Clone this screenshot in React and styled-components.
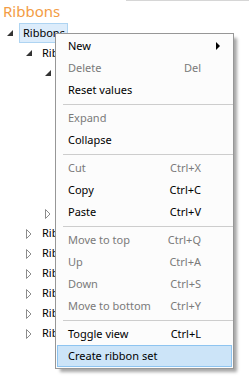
import React from "react";
import styled, { createGlobalStyle } from "styled-components";

const GlobalStyle = createGlobalStyle`
  html, body {
    margin: 0;
    padding: 0;
    background: #fff;
  }
  body {
    font-family: "Noto Sans", "Open Sans", sans-serif;
  }
`;

// rows under the context menu keep no label, only their expander shows
const treeRows = [
  { level: 0, state: "open", text: "Ribbons", selected: true },
  { level: 1, state: "open", text: "Ribbon 1" },
  { level: 2, state: "open" },
  { level: 3, state: "leaf" },
  { level: 3, state: "leaf" },
  { level: 3, state: "leaf" },
  { level: 3, state: "leaf" },
  { level: 3, state: "leaf" },
  { level: 3, state: "leaf" },
  { level: 2, state: "closed" },
  { level: 1, state: "closed", text: "Ribbon 2" },
  { level: 1, state: "closed", text: "Ribbon 3" },
  { level: 1, state: "closed", text: "Ribbon 4" },
  { level: 1, state: "closed", text: "Ribbon 5" },
  { level: 1, state: "closed", text: "Ribbon 6" },
  { level: 1, state: "closed", text: "Ribbon 7" },
];

// null = separator
const menuItems = [
  { text: "New", submenu: true },
  { text: "Delete", keys: "Del", disabled: true },
  { text: "Reset values" },
  null,
  { text: "Expand", disabled: true },
  { text: "Collapse" },
  null,
  { text: "Cut", keys: "Ctrl+X", disabled: true },
  { text: "Copy", keys: "Ctrl+C" },
  { text: "Paste", keys: "Ctrl+V" },
  null,
  { text: "Move to top", keys: "Ctrl+Q", disabled: true },
  { text: "Up", keys: "Ctrl+A", disabled: true },
  { text: "Down", keys: "Ctrl+S", disabled: true },
  { text: "Move to bottom", keys: "Ctrl+Y", disabled: true },
  null,
  { text: "Toggle view", keys: "Ctrl+L" },
  { text: "Create ribbon set", active: true },
];

function Expander({ state }) {
  if (state === "open") {
    return (
      <ExpanderBox>
        <svg width="6" height="6" viewBox="0 0 6 6">
          <polygon points="6,0 6,6 0,6" fill="#333" />
        </svg>
      </ExpanderBox>
    );
  }
  if (state === "closed") {
    return (
      <ExpanderBox>
        <ClosedArrow width="6" height="10" viewBox="0 0 6 10">
          <polygon points="0.5,0.5 0.5,9.5 5,5" fill="#fff" stroke="#8c8c8c" strokeWidth="1" />
        </ClosedArrow>
      </ExpanderBox>
    );
  }
  return <ExpanderBox />;
}

export default function App() {
  return (
    <>
      <GlobalStyle />
      <Page>
        <TopRule />
        <Heading>Ribbons</Heading>
        <Tree>
          {treeRows.map((row, i) => (
            <Row key={i} $level={row.level}>
              <Expander state={row.state} />
              {row.text && <Label $selected={row.selected}>{row.text}</Label>}
            </Row>
          ))}
        </Tree>

        {/* context menu */}
        <Menu>
          {menuItems.map((item, i) =>
            item === null ? (
              <Separator key={i} />
            ) : (
              <MenuItem key={i} $disabled={item.disabled} $active={item.active}>
                <span>{item.text}</span>
                <Shortcut>{item.keys}</Shortcut>
                <SubArrow>
                  {item.submenu && (
                    <svg width="4" height="8" viewBox="0 0 4 8">
                      <polygon points="0,0 4,4 0,8" fill="#000" />
                    </svg>
                  )}
                </SubArrow>
              </MenuItem>
            )
          )}
        </Menu>
      </Page>
    </>
  );
}

const Page = styled.div`
  position: relative;
  width: 249px;
  height: 383px;
  overflow: hidden;
  background: #fff;
`;

const TopRule = styled.div`
  height: 1px;
  margin-left: 126px;
  background-color: #d6d6d6;
`;

const Heading = styled.div`
  font-size: 15px;
  line-height: 20px;
  color: #f39c44;
  padding-left: 3px;
  white-space: nowrap;
`;

const Tree = styled.div`
  margin-top: 2px;
  display: flex;
  flex-direction: column;
`;

const Row = styled.div`
  display: flex;
  align-items: center;
  height: 20px;
  padding-left: ${(p) => 2 + p.$level * 19}px;
`;

const ExpanderBox = styled.div`
  width: 16px;
  height: 20px;
  flex: none;
  display: flex;
  align-items: center;
  justify-content: center;
`;

const ClosedArrow = styled.svg`
  margin-top: 2px;
`;

const Label = styled.div`
  margin-left: 1px;
  height: 18px;
  line-height: 18px;
  padding: 0 2px 0 3px;
  font-size: 11px;
  color: #000;
  white-space: nowrap;
  border: 1px solid ${(p) => (p.$selected ? "#aed4f2" : "transparent")};
  background-color: ${(p) => (p.$selected ? "#dcecfb" : "transparent")};
`;

const Menu = styled.div`
  position: absolute;
  left: 55px;
  top: 33px;
  width: 176px;
  padding: 1px 0 1px 1px;
  border: 1px solid #979797;
  background-color: #fcfcfc;
  box-shadow: 4px 4px 3px -1px rgba(0, 0, 0, 0.35);
  display: flex;
  flex-direction: column;
`;

const MenuItem = styled.div`
  display: grid;
  grid-template-columns: 1fr auto 30px;
  align-items: center;
  height: 22px;
  box-sizing: border-box;
  padding-left: 10px;
  font-size: 11px;
  line-height: 20px;
  white-space: nowrap;
  color: ${(p) => (p.$disabled ? "#7a7a7a" : "#000")};
  border: 1px solid ${(p) => (p.$active ? "#8ec4f0" : "transparent")};
  background-color: ${(p) => (p.$active ? "#cce4f8" : "transparent")};
  margin-right: 1px;
`;

const Shortcut = styled.span`
  text-align: right;
`;

const SubArrow = styled.span`
  display: flex;
  align-items: center;
  padding-left: 15px;
`;

const Separator = styled.div`
  height: 6px;
  display: flex;
  align-items: center;
  margin-left: 6px;
  &::after {
    content: "";
    flex: 1;
    height: 1px;
    background-color: #cdcdcd;
  }
`;
